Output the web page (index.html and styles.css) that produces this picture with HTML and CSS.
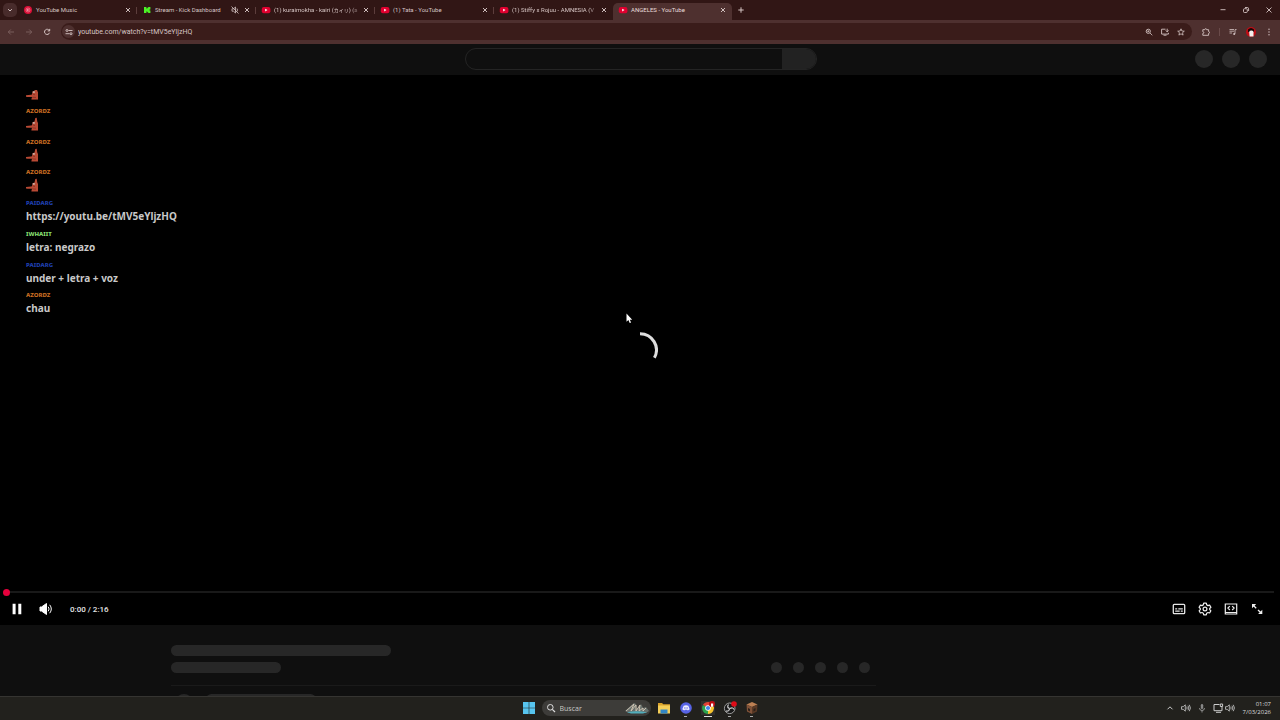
FILE: index.html
```html
<!DOCTYPE html>
<html lang="es">
<head>
<meta charset="utf-8">
<title>ANGELES - YouTube</title>
<link rel="stylesheet" href="styles.css">
</head>
<body>
<svg class="defs" aria-hidden="true">
  <symbol id="close" viewBox="0 0 8 8"><path d="M2 2l4 4M6 2L2 6" stroke="currentColor" stroke-width=".9" fill="none"/></symbol>
  <symbol id="yt" viewBox="0 0 10 10"><rect x=".8" y="2" width="8.6" height="6.2" rx="2" fill="#e0002f"/><path d="M4.2 3.7v2.7l2.3-1.35z" fill="#fff"/></symbol>
  <symbol id="pointing" viewBox="0 0 13 13"><path d="M0 8.6L5 8l1-.2.5-3L8.500 4 9.300.4l1.400-.1.600 3.700.700 1.500v7.400H5.400l.3-1.900 1-.8-5.200.1-1.500-.3z" fill="#b94a35"/><path d="M6.800 4.500h2v1.800h-2z" fill="#c7aaa0"/><path d="M7 7.500l2 .5M7 10.500l3 .2" stroke="#7c2a20" stroke-width=".7"/></symbol>
  <symbol id="speaker" viewBox="0 0 12 12"><path d="M1.500 4.700h1.700L5.300 2.800v6.400L3.200 7.300H1.500zM6.700 4.700q.9 1.300 0 2.600M8 3.700q1.700 2.300 0 4.600M9.300 2.800q2.300 3.200 0 6.400" fill="none" stroke="currentColor" stroke-width=".8"/></symbol>
</svg>

<header class="tabbar">
  <button class="tab-menu" aria-label="Buscar pestañas"><svg viewBox="0 0 8 8"><path d="M2.200 3.200L4 5l1.800-1.800" fill="none" stroke="currentColor"/></svg></button>
  <nav class="tabs">
    <div class="tab"><svg class="fav" viewBox="0 0 10 10"><circle cx="5" cy="5" r="4" fill="#dc1038"/><circle cx="5" cy="5" r="2" fill="none" stroke="#f5a5b0" stroke-width=".6"/><path d="M4.400 4v2L6 5z" fill="#fff"/></svg><span class="title">YouTube Music</span><button class="x" aria-label="Cerrar"><svg><use href="#close"/></svg></button></div>
    <div class="tab"><svg class="fav" viewBox="0 0 10 10"><path d="M2 2h2.400v1.600h.9v-.8h.9V2h2.200v2.400h-.9v1.200h.9V8H6.200v-.8h-.9v-.8h-.9V8H2z" fill="#4bf226"/></svg><span class="title">Stream - Kick Dashboard</span><svg class="mute" viewBox="0 0 10 10"><path d="M2 3.800h1.500L5.500 2v6L3.500 6.200H2zM7 3.500q1 1.500 0 3M1.500 1.500l7 7" fill="none" stroke="currentColor" stroke-width=".8"/></svg><button class="x" aria-label="Cerrar"><svg><use href="#close"/></svg></button></div>
    <div class="tab"><svg class="fav"><use href="#yt"/></svg><span class="title fade">(1) kuraimokha - kairi (<span class="kana">カイリ</span>) (a</span><button class="x" aria-label="Cerrar"><svg><use href="#close"/></svg></button></div>
    <div class="tab"><svg class="fav"><use href="#yt"/></svg><span class="title">(1) Tata - YouTube</span><button class="x" aria-label="Cerrar"><svg><use href="#close"/></svg></button></div>
    <div class="tab"><svg class="fav"><use href="#yt"/></svg><span class="title fade">(1) Stiffy x Rojuu - AMNESIA (V</span><button class="x" aria-label="Cerrar"><svg><use href="#close"/></svg></button></div>
    <div class="tab active"><svg class="fav"><use href="#yt"/></svg><span class="title">ANGELES - YouTube</span><button class="x" aria-label="Cerrar"><svg><use href="#close"/></svg></button></div>
  </nav>
  <button class="new-tab" aria-label="Nueva pestaña"><svg viewBox="0 0 8 8"><path d="M4 1.300v5.400M1.300 4h5.400" stroke="currentColor"/></svg></button>
  <div class="window-buttons">
    <button aria-label="Minimizar"><svg viewBox="0 0 8 8"><path d="M1.500 3.700h5" stroke="currentColor" stroke-width=".9"/></svg></button>
    <button aria-label="Restaurar"><svg viewBox="0 0 8 8"><rect x="1.500" y="2.700" width="3.800" height="3.800" rx="1" fill="none" stroke="currentColor" stroke-width=".9"/><path d="M3 1.500h2.300q1.300 0 1.300 1.300V5" fill="none" stroke="currentColor" stroke-width=".9"/></svg></button>
    <button aria-label="Cerrar ventana"><svg viewBox="0 0 8 8"><path d="M1.500 1.500l5 5M6.500 1.500l-5 5" stroke="currentColor" stroke-width=".9"/></svg></button>
  </div>
</header>

<div class="toolbar">
  <div class="nav-buttons">
    <button disabled aria-label="Atrás"><svg viewBox="0 0 8 8"><path d="M7 4H1.300M3.800 1.500L1.300 4l2.500 2.500" fill="none" stroke="currentColor" stroke-width=".9"/></svg></button>
    <button disabled aria-label="Adelante"><svg viewBox="0 0 8 8"><path d="M1 4h5.700M4.200 1.500L6.700 4 4.200 6.500" fill="none" stroke="currentColor" stroke-width=".9"/></svg></button>
    <button aria-label="Recargar"><svg viewBox="0 0 8 8"><path d="M6.400 2.600A2.600 2.600 0 1 0 6.600 4.700M6.700.9v2H4.700" fill="none" stroke="currentColor"/></svg></button>
  </div>
  <div class="address">
    <button class="site" aria-label="Información del sitio"><svg viewBox="0 0 10 10"><path d="M4.500 3.500h4M1.500 6.700h4" stroke="currentColor" stroke-width=".9"/><circle cx="3" cy="3.500" r="1" fill="none" stroke="currentColor" stroke-width=".9"/><circle cx="7" cy="6.700" r="1" fill="none" stroke="currentColor" stroke-width=".9"/></svg></button>
    <input class="url" aria-label="Dirección" value="youtube.com/watch?v=tMV5eYljzHQ">
    <button aria-label="Zoom"><svg viewBox="0 0 8 8"><circle cx="3.300" cy="3.300" r="2.100" fill="none" stroke="currentColor" stroke-width=".9"/><path d="M5 5l2.300 2.300M2.300 3.300h2M3.300 2.300v2" stroke="currentColor" stroke-width=".8"/></svg></button>
    <button aria-label="Instalar"><svg viewBox="0 0 8 8"><path d="M4.500 1.200H.6v4.900h6.800V4.800M2.500 7.200h3M6.200.7v3M4.800 2.500l1.400 1.400 1.400-1.400" fill="none" stroke="currentColor" stroke-width=".9"/></svg></button>
    <button aria-label="Marcador"><svg viewBox="0 0 8 8"><path d="M4 .8l.9 2.200 2.400.2-1.800 1.500.6 2.400L4 5.800 1.900 7.100l.6-2.400L.7 3.200l2.400-.2z" fill="none" stroke="currentColor" stroke-width=".8"/></svg></button>
  </div>
  <div class="actions">
    <button aria-label="Extensiones"><svg viewBox="0 0 8 8"><path d="M.8 1.700h1.900q0-1 1-1t1 1h1.900v1.900q.9 0 .9.900t-.9.900v1.900H.8V5.500q1 0 1-.9t-1-.9z" fill="none" stroke="currentColor" stroke-width=".9"/></svg></button>
    <span class="divider"></span>
    <button aria-label="Control multimedia"><svg viewBox="0 0 8 8"><path d="M.5 1.500h4.500M.5 3.200h4.500M.5 5h2.500M6 5.800V1.600h1.600" fill="none" stroke="currentColor" stroke-width=".8"/><circle cx="5.200" cy="5.900" r="1" fill="currentColor"/></svg></button>
    <button class="profile" aria-label="Perfil"><svg viewBox="0 0 10 10"><circle cx="5" cy="5" r="5" fill="#bd0d15"/><path d="M2 2.500Q5-.5 8 2.500V5H2z" fill="#170406"/><path d="M3.200 5.200q0-2 2.300-1.700 2.500 0 2 3v3H3.600z" fill="#f3efed"/></svg></button>
    <button aria-label="Menú"><svg viewBox="0 0 8 8"><g fill="currentColor"><circle cx="4" cy="1.300" r=".7"/><circle cx="4" cy="4" r=".7"/><circle cx="4" cy="6.700" r=".7"/></g></svg></button>
  </div>
</div>

<div class="masthead">
  <div class="search"><input aria-label="Buscar en YouTube"><button aria-label="Buscar"></button></div>
  <div class="bubbles"><i></i><i></i><i></i></div>
</div>

<main class="player">
  <div class="stage">
    <svg class="emote-cut" viewBox="0 3.500 13 9.500"><use href="#pointing" width="13" height="13"/></svg>
    <div class="chat">
      <div class="msg"><b class="orange">AZORDZ</b><p><svg class="emote"><use href="#pointing"/></svg></p></div>
      <div class="msg"><b class="orange">AZORDZ</b><p><svg class="emote"><use href="#pointing"/></svg></p></div>
      <div class="msg"><b class="orange">AZORDZ</b><p><svg class="emote"><use href="#pointing"/></svg></p></div>
      <div class="msg"><b class="blue">PAIDARG</b><p>https://youtu.be/tMV5eYljzHQ</p></div>
      <div class="msg"><b class="green">IWHAIIT</b><p>letra: negrazo</p></div>
      <div class="msg"><b class="blue">PAIDARG</b><p>under + letra + voz</p></div>
      <div class="msg"><b class="orange">AZORDZ</b><p>chau</p></div>
    </div>
  </div>
  <svg class="spinner" viewBox="0 0 36 36"><path d="M18 1.700A16.300 16.300 0 0 1 32.400 25.800" fill="none" stroke="#dedede" stroke-width="3"/></svg>
  <svg class="cursor" viewBox="0 0 8 11"><path d="M.5.500v8.300l1.900-1.700 1.300 3 1.400-.6-1.300-2.800h2.400z" fill="#fff"/></svg>
  <input class="seek" type="range" min="0" max="136" value="0" aria-label="Progreso">
  <div class="controls">
    <button aria-label="Pausa"><svg viewBox="0 0 14 14"><path d="M2.600 1.800h3v10.400h-3zM8.300 1.800h3v10.400h-3z" fill="#fff"/></svg></button>
    <button class="volume" aria-label="Volumen"><svg viewBox="0 0 14 14"><path d="M1 5h1.500L7.500 1.500v11L2.500 9H1z" fill="#fff" stroke="#fff" stroke-linejoin="round"/><path d="M9.200 4.700q1.800 2.300 0 4.600M10.700 2.800q3.200 4.200 0 8.400" fill="none" stroke="#fff"/></svg></button>
    <span class="time">0:00 / 2:16</span>
    <div class="right">
      <button aria-label="Subtítulos"><svg viewBox="0 0 14 14"><rect x="1.300" y="2.300" width="11.400" height="9.400" rx="1" fill="none" stroke="#e6e6e6" stroke-width="1.300"/><path d="M3.200 6.800h2M6.300 6.800h4.500M3.200 9.200h4.500M8.800 9.200h2" stroke="#e6e6e6" stroke-width="1.200"/></svg></button>
      <button aria-label="Configuración"><svg viewBox="0 0 14 14"><path d="M5.700 1.200h2.600l.4 1.700 1.300.7 1.600-.5 1.300 2.200L11.700 6.500v1.100l1.200 1.200-1.300 2.200-1.600-.5-1.300.7-.4 1.600H5.700l-.4-1.600-1.300-.7-1.600.5-1.300-2.200 1.200-1.200V6.500L1.100 5.300l1.300-2.200 1.600.5 1.300-.7z" fill="none" stroke="#eee" stroke-width="1.200" stroke-linejoin="round"/><circle cx="7" cy="7" r="1.900" fill="none" stroke="#eee" stroke-width="1.200"/></svg></button>
      <button aria-label="Modo cine"><svg viewBox="0 0 14 14"><path d="M1.300 2h11.400v10H1.300zM1.300 10.500h11.400M5.800 4.200L3.900 6.100l1.900 1.900M8.200 4.200l1.900 1.900L8.200 8" fill="none" stroke="#eee" stroke-width="1.200"/></svg></button>
      <button aria-label="Pantalla completa"><svg viewBox="0 0 14 14"><path d="M6.200 2H2v4.200zM12.300 7.800V12H8.100z" fill="#eee"/><path d="M3 3l3.200 3.200M8 8l3.500 3.300" stroke="#eee" stroke-width="1.300"/></svg></button>
    </div>
  </div>
</main>

<section class="below">
  <div class="meta">
    <div class="bar long"></div>
    <div class="row"><div class="bar"></div><div class="dots"><i></i><i></i><i></i><i></i><i></i></div></div>
    <div class="owner"><i></i><div class="bar"></div></div>
  </div>
</section>

<footer class="taskbar">
  <div class="apps">
    <button aria-label="Inicio"><svg viewBox="0 0 14 14"><path d="M1 1h5.700v5.700H1zM7.300 1H13v5.700H7.300zM1 7.300h5.700V13H1zM7.300 7.300H13V13H7.300z" fill="#57c4ee"/></svg></button>
    <label class="find"><svg class="lens" viewBox="0 0 10 10"><circle cx="4.300" cy="4.300" r="2.800" fill="none" stroke="#ddd"/><path d="M6.300 6.300L9 9" stroke="#ddd" stroke-width="1.200"/></svg><input type="text" placeholder="Buscar" aria-label="Buscar"><svg class="art" viewBox="0 0 24 12"><path d="M0 9L9 1l2 1 1 5 4-5 2 4 3-1 3 4-3 2H4z" fill="#68706c"/><path d="M1 9l8-7-3 7 5-6v6l4-6-1 6 4-3v3l3-3" fill="none" stroke="#d5c7b5" stroke-width=".9"/><path d="M2 10.300q9-2 20 0l-4 1.200H6z" fill="#52aebb"/></svg></label>
    <button class="folder" aria-label="Explorador"><svg viewBox="0 0 14 14"><path d="M1 2h4l1.300 1.300H13V6H1z" fill="#d9a32b"/><path d="M1 4.500h12v8H1z" fill="#f5cf58"/><path d="M3.500 8.500h7v4h-7z" fill="#3286c4"/></svg></button>
    <button class="run" aria-label="Discord"><svg viewBox="0 0 14 14"><circle cx="7" cy="7" r="5.800" fill="#5763e5"/><path d="M4.700 4.700q2.300-.9 4.600 0l1.400 3.500-1.900 1.300-.6-.8H5.800l-.6.800-1.900-1.300z" fill="#eef"/><circle cx="5.900" cy="7" r=".7" fill="#5763e5"/><circle cx="8.100" cy="7" r=".7" fill="#5763e5"/></svg></button>
    <button class="run current" aria-label="Chrome"><svg viewBox="0 0 14 14"><path d="M7 7L1.900 4A6 6 0 0 1 12.200 4z" fill="#e24335"/><path d="M7 7L1.900 4A6 6 0 0 0 7 13z" fill="#2da44e"/><path d="M7 7l5.200-3A6 6 0 0 1 7 13z" fill="#f8c52d"/><circle cx="7" cy="7" r="2.800" fill="#fff"/><circle cx="7" cy="7" r="2.100" fill="#4386e8"/><circle cx="11" cy="3" r="3" fill="#bc0911"/><path d="M10 2.500h2.200v3.300H10z" fill="#fff"/></svg></button>
    <button class="run" aria-label="OBS"><svg viewBox="0 0 14 14"><circle cx="6.700" cy="7.300" r="5.300" fill="#191919" stroke="#bbb" stroke-width=".8"/><path d="M6.500 7.500q-3-1-1-4M7 7.500q3-1.500 4 1M6.500 7.500q0 3-3.500 2.500" fill="none" stroke="#ccc" stroke-width="1.200"/><circle cx="11" cy="3" r="2.800" fill="#df0c18"/></svg></button>
    <button class="run" aria-label="Minecraft"><svg viewBox="0 0 14 14"><path d="M1.500 3.500L7 1l5.500 2.500L7 6z" fill="#bd8053"/><path d="M1.500 3.500L7 6v7l-5-2.500z" fill="#805238"/><path d="M12.500 3.500L7 6v7l5-2.500z" fill="#593925"/><path d="M3 7l2 1v2.500L3 9.600zM8.500 8l2-1v2.500l-2 1z" fill="#2b2019"/></svg></button>
  </div>
  <div class="tray">
    <svg viewBox="0 0 12 12"><path d="M3.500 7.300L6 4.800l2.500 2.500" fill="none" stroke="currentColor"/></svg>
    <svg class="sound" viewBox="0 0 12 12"><use href="#speaker"/></svg>
    <svg class="mic" viewBox="0 0 12 12"><rect x="4.800" y="2" width="2.400" height="5" rx="1.200" fill="#888"/><path d="M3.500 6q0 2.500 2.500 2.500T8.500 6M6 8.500v2" fill="none" stroke="#aaa" stroke-width=".8"/></svg>
    <svg viewBox="0 0 12 12"><path d="M7.500 2.500H2v6.200h8V5M4 10.300h5M8.300 2h2.300v2.500H8.300z" fill="none" stroke="currentColor"/></svg>
    <svg viewBox="0 0 12 12"><use href="#speaker"/></svg>
    <div class="clock"><time>01:07</time><time>7/03/2026</time></div>
  </div>
</footer>
</body>
</html>
```
FILE: styles.css
```css
* { box-sizing: border-box; }
body {
  margin: 0;
  min-height: 100vh;
  display: flex;
  flex-direction: column;
  background: #0f0f0f;
  color: #d6c5c4;
  font-family: "Open Sans", "Noto Sans", "Noto Sans CJK JP", sans-serif;
}
button, input { font: inherit; color: inherit; background: none; border: 0; padding: 0; margin: 0; min-width: 0; outline: 0; }
button { display: flex; align-items: center; justify-content: center; flex: none; }
svg { display: block; flex: none; }
i { display: block; flex: none; border-radius: 50%; background: #272727; }
.defs { position: absolute; width: 0; height: 0; }

/* Browser tabs */
.tabbar { height: 20px; display: flex; align-items: center; background: #311615; font-family: Roboto, "Noto Sans CJK JP", sans-serif; font-size: 6px; }
.tab-menu { width: 14px; height: 14px; margin: 0 1px 0 3px; border-radius: 5px; background: #482b2b; }
.tab-menu svg { width: 8px; height: 8px; }
.tabs { display: flex; flex: 0 1 714px; min-width: 0; align-self: stretch; padding-top: 3px; }
.tab { flex: 1 1 0; min-width: 0; display: flex; align-items: center; padding: 0 5px 3px; position: relative; }
.tab:not(.active):not(:nth-child(5))::after { content: ""; position: absolute; right: 0; top: 4px; width: 1px; height: 7px; background: #5c3d3c; }
.tab.active { background: #4e302f; border-radius: 5px 5px 0 0; }
.fav { width: 10px; height: 10px; margin-right: 3px; }
.title { flex: 1; min-width: 0; white-space: nowrap; line-height: 12px; }
.title.fade { -webkit-mask-image: linear-gradient(90deg, #000 90%, transparent); mask-image: linear-gradient(90deg, #000 90%, transparent); }
.fade + .x { margin-left: 2px; }
.kana { font-size: 5px; }
.active .title { color: #eadddd; }
.x { width: 8px; height: 8px; margin-left: 6px; }
.x svg { width: 8px; height: 8px; color: #e0d0cf; }
.mute { width: 10px; height: 10px; }
.mute + .x { margin-left: 3px; }
.new-tab { margin-left: 5px; }
.new-tab svg { width: 8px; height: 8px; }
.window-buttons { margin-left: auto; display: flex; gap: 15px; padding-right: 7px; }
.window-buttons svg { width: 8px; height: 8px; }

/* Address row */
.toolbar { height: 24px; display: flex; align-items: center; padding-bottom: 1px; background: #4e302f; }
.toolbar svg { width: 8px; height: 8px; }
.nav-buttons { display: flex; gap: 10px; padding: 0 10px 0 7px; }
.nav-buttons button:disabled { color: #7e6261; }
.address { flex: 1; height: 17px; display: flex; align-items: center; gap: 8px; padding: 0 7px 0 1px; border-radius: 9px; background: #3a1c1a; min-width: 0; }
.site { width: 13px; height: 13px; border-radius: 50%; background: #4e302f; margin-right: -5px; }
.toolbar .site svg { width: 10px; height: 10px; }
.url { flex: 1; font-family: Roboto, sans-serif; font-size: 7px; height: 14px; }
.actions { display: flex; align-items: center; gap: 9px; padding: 0 7px 0 10px; }
.divider { width: 1px; height: 8px; background: #6a4b4a; }
.toolbar .profile svg { width: 10px; height: 10px; }

/* Page header placeholders */
.masthead { height: 31px; display: grid; grid-template-columns: 1fr 352px 1fr; align-items: center; padding: 0 13px 2px 14px; background: #0f0f0f; }
.search { grid-column: 2; height: 22px; display: flex; border: 1px solid #242424; border-radius: 11px; overflow: hidden; }
.search input { flex: 1; }
.search button { width: 34px; background: #222; }
.bubbles { display: flex; justify-content: flex-end; gap: 9px; }
.bubbles i { width: 18px; height: 18px; }

/* Video */
.player { flex: 1; position: relative; display: flex; flex-direction: column; background: #000; }
.stage { flex: 1; padding: 15px 26px; }
.emote-cut { width: 13px; height: 10px; }
.chat { height: 215px; margin-top: 5px; display: grid; grid-auto-rows: 1fr; font-family: "Noto Sans", sans-serif; font-weight: 700; color: #c8c8c8; }
.msg b { display: block; font-size: 6px; line-height: 12px; font-weight: 800; }
.msg p { margin: 0; font-size: 10px; line-height: 14px; }
.emote { width: 13px; height: 14px; }
.orange { color: #c96d22; }
.blue { color: #1f3fae; }
.green { color: #86df70; }
.spinner { position: absolute; left: calc(50% - 18px); top: calc(50% - 18px); width: 36px; height: 36px; }
.cursor { position: absolute; left: calc(50% - 14px); top: calc(50% - 37px); width: 8px; height: 11px; }
.seek { appearance: none; -webkit-appearance: none; height: 6px; margin: 0 6px 0 3px; }
.seek::-webkit-slider-runnable-track { height: 2px; background: #191919; }
.seek::-webkit-slider-thumb { -webkit-appearance: none; width: 7px; height: 7px; margin-top: -2px; border-radius: 50%; background: #e6003c; }
.controls { height: 30px; display: flex; align-items: center; padding: 0 16px 2px 10px; }
.controls svg { width: 14px; height: 14px; }
.volume { margin-left: 15px; }
.time { margin-left: 17px; font-family: Roboto, sans-serif; font-weight: 500; font-size: 8px; color: #e6e6e6; }
.right { margin-left: auto; display: flex; gap: 12px; }

/* Placeholders under the video */
.below { height: 71px; overflow: hidden; padding: 20px 0 0 171px; }
.meta { max-width: 705px; }
.bar { width: 110px; height: 11px; border-radius: 6px; background: #272727; }
.bar.long { width: 220px; }
.row { display: flex; justify-content: space-between; align-items: center; padding: 6px 6px 12px 0; border-bottom: 1px solid #1a1a1a; }
.dots { display: flex; gap: 11px; }
.dots i { width: 11px; height: 11px; }
.owner { display: flex; gap: 13px; padding: 8px 0 0 4px; }
.owner i { width: 18px; height: 18px; }

/* Taskbar */
.taskbar { height: 24px; display: grid; grid-template-columns: 1fr auto 1fr; align-items: center; padding-bottom: 1px; background: #22211d; border-top: 1px solid #353431; color: #ccc; }
.apps { grid-column: 2; display: flex; align-items: center; gap: 8px; }
.apps button svg { width: 14px; height: 14px; }
.find { width: 109px; height: 16px; margin: 0 -2px; display: flex; align-items: center; gap: 4px; padding: 0 2px 0 4px; border-radius: 8px; background: #3d3c39; font-size: 7px; }
.find input { flex: 1; }
.find input::placeholder { color: #c8c8c6; opacity: 1; }
.lens { width: 10px; height: 10px; }
.art { width: 24px; height: 12px; }
.run { position: relative; }
.run::after { content: ""; position: absolute; bottom: -2px; width: 3px; height: 1px; background: #aaa; }
.run.current { background: #302f2c; }
.run.current::after { width: 8px; background: #ddd; }
.tray { display: flex; justify-content: flex-end; align-items: center; padding-right: 9px; }
.tray svg { width: 12px; height: 12px; }
.tray .sound { margin: 0 2px 0 4px; }
.tray .mic { margin: 0 4px 0 2px; }
.clock { display: flex; flex-direction: column; text-align: right; font-size: 6px; line-height: 8px; margin-left: 7px; color: #ddd; }
```
